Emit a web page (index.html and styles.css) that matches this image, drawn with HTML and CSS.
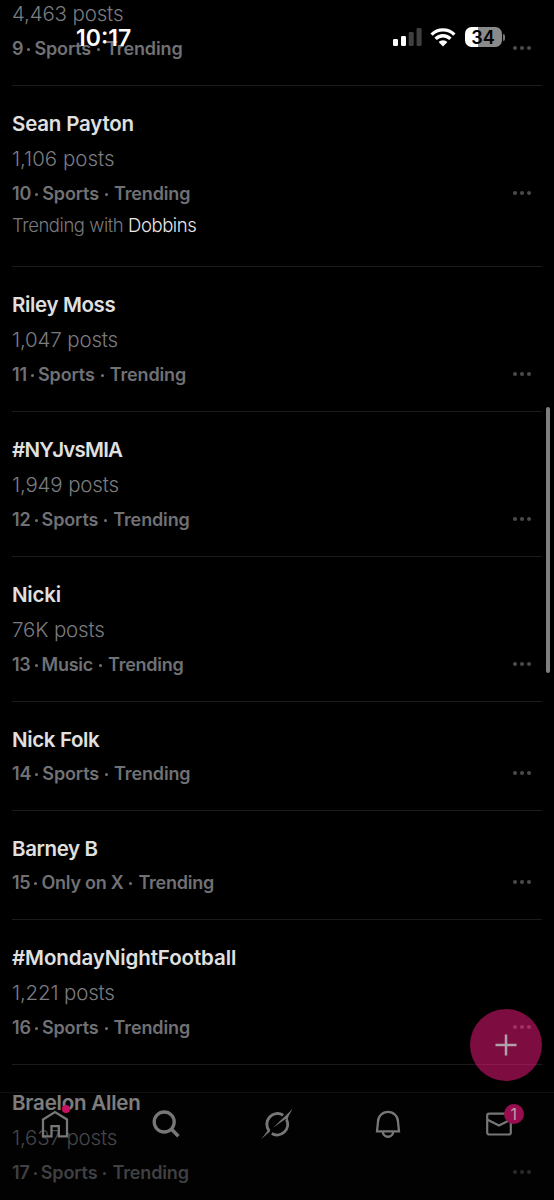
FILE: index.html
```html
<!DOCTYPE html>
<html lang="en">
<head>
<meta charset="utf-8">
<title>Trending</title>
<link rel="stylesheet" href="styles.css">
</head>
<body>
<main class="trends">
  <article class="trend trend-first">
    <p class="posts">4,463 posts</p>
    <p class="meta"><span>9</span><i class="dot"></i><span>Sports</span><i class="dot dot-wide"></i><span>Trending</span><span class="more"><i></i><i></i><i></i></span></p>
  </article>
  <article class="trend trend-related">
    <h2 class="title">Sean Payton</h2>
    <p class="posts posts-loose">1,106 posts</p>
    <p class="meta"><span>10</span><i class="dot"></i><span>Sports</span><i class="dot dot-wide"></i><span>Trending</span><span class="more"><i></i><i></i><i></i></span></p>
    <p class="related">Trending with <a>Dobbins</a></p>
  </article>
  <article class="trend">
    <h2 class="title title-tight">Riley Moss</h2>
    <p class="posts">1,047 posts</p>
    <p class="meta"><span>11</span><i class="dot"></i><span>Sports</span><i class="dot dot-wide"></i><span>Trending</span><span class="more"><i></i><i></i><i></i></span></p>
  </article>
  <article class="trend">
    <h2 class="title title-caps">#NYJvsMIA</h2>
    <p class="posts">1,949 posts</p>
    <p class="meta"><span>12</span><i class="dot"></i><span>Sports</span><i class="dot dot-wide"></i><span>Trending</span><span class="more"><i></i><i></i><i></i></span></p>
  </article>
  <article class="trend">
    <h2 class="title">Nicki</h2>
    <p class="posts">76K posts</p>
    <p class="meta meta-tight"><span>13</span><i class="dot"></i><span>Music</span><i class="dot dot-wide"></i><span>Trending</span><span class="more"><i></i><i></i><i></i></span></p>
  </article>
  <article class="trend">
    <h2 class="title title-tight">Nick Folk</h2>
    <p class="meta"><span>14</span><i class="dot"></i><span>Sports</span><i class="dot dot-wide"></i><span>Trending</span><span class="more"><i></i><i></i><i></i></span></p>
  </article>
  <article class="trend">
    <h2 class="title title-tight">Barney B</h2>
    <p class="meta meta-tight"><span>15</span><i class="dot"></i><span>Only on X</span><i class="dot dot-wide"></i><span>Trending</span><span class="more"><i></i><i></i><i></i></span></p>
  </article>
  <article class="trend">
    <h2 class="title title-long">#MondayNightFootball</h2>
    <p class="posts">1,221 posts</p>
    <p class="meta"><span>16</span><i class="dot"></i><span>Sports</span><i class="dot dot-wide"></i><span>Trending</span><span class="more"><i></i><i></i><i></i></span></p>
  </article>
  <article class="trend">
    <h2 class="title">Braelon Allen</h2>
    <p class="posts">1,637 posts</p>
    <p class="meta"><span>17</span><i class="dot"></i><span>Sports</span><i class="dot dot-wide"></i><span>Trending</span><span class="more"><i></i><i></i><i></i></span></p>
  </article>
</main>

<header class="status">
  <span class="clock">10:17</span>
  <div class="status-icons">
    <svg width="29" height="20" viewBox="0 0 29 20"><g fill="#fff"><rect x="0" y="12" width="5" height="7" rx="1.3"/><rect x="8" y="9" width="5" height="10" rx="1.3"/></g><g fill="#3f3f3f"><rect x="15.7" y="5" width="5" height="14" rx="1.3"/><rect x="23.6" y="1" width="5" height="18" rx="1.3"/></g></svg>
    <svg class="wifi" width="26" height="20" viewBox="0 0 26 20"><g fill="none" stroke="#fff" stroke-width="3.3"><path d="M1.6 7.6A16.2 16.2 0 0 1 24.4 7.6"/><path d="M5.6 11.8A10.5 10.5 0 0 1 20.4 11.8"/></g><path d="M8.6 15.1A6.2 6.2 0 0 1 17.4 15.1L13 19.4Z" fill="#fff"/></svg>
    <div class="battery"><span>34</span></div>
    <i class="battery-cap"></i>
  </div>
</header>

<i class="scrollbar"></i>

<button class="compose" aria-label="Compose"><svg width="22" height="22" viewBox="0 0 22 22"><path d="M11 .5V21.5M.5 11H21.5" stroke="#b0a1a9" stroke-width="2.5" fill="none"/></svg></button>

<nav class="tabs">
  <a class="tab"><svg width="28" height="30" viewBox="0 0 28 30"><path d="M2 10.5L14 3L26 10.5V27.3H17.8V17.2H10.5V27.3H2Z" fill="none" stroke="#777" stroke-width="2.3"/></svg><i class="home-dot"></i></a>
  <a class="tab"><svg width="28" height="30" viewBox="0 0 28 30"><circle cx="12.2" cy="13" r="10" fill="none" stroke="#777" stroke-width="3.3"/><path d="M19.3 20L26.4 27.2" stroke="#777" stroke-width="3.5"/></svg></a>
  <a class="tab"><svg width="34" height="34" viewBox="0 0 34 34"><g fill="none" stroke="#777" stroke-width="2.9"><path d="M9.2 24A10.7 10.7 0 0 1 23.2 8.2"/><path d="M11.8 26.6A10.7 10.7 0 0 0 26.6 12.6"/></g><path d="M32.6 1.4C29.5 7.6 28 9.6 27.5 13L25.2 12.2L13 20.8L21.8 12.2C25.6 8.5 29 5.5 32.6 1.4ZM1 32.6C4.4 27.7 6.3 25.6 8 22.9L10.4 24C7 27.3 4.4 29.4 1 32.6Z" fill="#777"/></svg></a>
  <a class="tab"><svg width="28" height="30" viewBox="0 0 28 30"><path d="M4 12.8A10 10 0 0 1 24 12.8L25 22.4H3Z" fill="none" stroke="#777" stroke-width="2.3"/><path d="M8.8 22.5A5.2 5.2 0 0 0 19.2 22.5" fill="none" stroke="#777" stroke-width="2.5"/></svg></a>
  <a class="tab"><svg width="28" height="30" viewBox="0 0 28 30"><rect x="2.2" y="4.7" width="23.6" height="20.8" rx="2" fill="none" stroke="#777" stroke-width="2.2"/><path d="M2.5 10.8L14 16.5L25.5 10.8" fill="none" stroke="#777" stroke-width="2.3"/></svg><b class="badge">1</b></a>
</nav>
</body>
</html>
```
FILE: styles.css
```css
* { box-sizing: border-box; }
html, body { margin: 0; height: 1200px; overflow: hidden; background: #000; }
body { position: relative; font-family: Inter, "Liberation Sans", sans-serif; }
p, h2 { margin: 0; }

.trends { padding: 0 12px; margin-top: -4px; }
.trend { height: 145px; padding-top: 21px; border-top: 1px solid #1b1b1c; white-space: nowrap; display: flow-root; }
.trend-first { height: 89px; padding-top: 0; border-top: 0; }
.trend-related { height: 181px; }
.trend:not(:has(.posts)) { height: 109px; }

.title { height: 34px; line-height: 33px; font-size: 20.5px; font-weight: 600; color: #e0e0e1; letter-spacing: -0.2px; }
.title-tight { letter-spacing: -0.36px; }
.title-caps { letter-spacing: -0.8px; }
.title-long { letter-spacing: -0.1px; }
.posts { height: 36px; line-height: 35px; font-size: 20.5px; font-weight: 350; color: #7b7c80; letter-spacing: -0.15px; }
.posts-loose { letter-spacing: 0; }
.meta { height: 32px; display: flex; align-items: center; font-size: 18px; font-weight: 600; color: #707175; letter-spacing: -0.13px; }
.meta-tight { letter-spacing: -0.25px; }
.dot { width: 3px; height: 3px; border-radius: 50%; background: #707276; margin: 2px 4px 0 4px; }
.dot-wide { margin: 2px 6px 0; }
.more { display: flex; gap: 3px; margin-left: auto; padding: 0 11px 0 0; }
.more i { width: 4px; height: 4px; border-radius: 50%; background: #4b4b4d; }
.related { height: 32px; margin-top: 1px; line-height: 31px; font-size: 18.5px; font-weight: 350; color: #78797d; letter-spacing: -0.45px; }
.related a { color: #e8e8e9; }

.status { position: absolute; top: 0; left: 0; width: 554px; height: 74px; padding-left: 76px; display: flex; align-items: center; color: #fff; }
.clock { font-size: 23px; font-weight: 600; line-height: 28px; padding-top: 1px; }
.status-icons { display: flex; align-items: center; margin-left: auto; padding-right: 49px; }
.wifi { margin: 0 9px 0 8px; }
.battery { width: 37px; height: 20px; border-radius: 6.5px; background: linear-gradient(90deg, #fff 13px, #8a8a8a 13px); display: flex; align-items: center; justify-content: center; color: #000; font-size: 18px; font-weight: 600; }
.battery-cap { width: 2.5px; height: 7px; margin-left: 1px; border-radius: 0 3px 3px 0; background: #777; }

.scrollbar { position: absolute; left: 546px; top: 407px; width: 4px; height: 266px; border-radius: 2px; background: #7f7f7f; }

.compose { position: absolute; left: 470px; top: 1009px; width: 72px; height: 72px; padding: 0; border: 0; border-radius: 50%; background: rgba(249, 24, 128, .5); display: grid; place-items: center; }

.tabs { position: absolute; left: 0; top: 1092px; width: 554px; height: 108px; padding-top: 14px; display: grid; grid-template-columns: repeat(5, 1fr); align-items: start; background: rgba(4, 4, 4, .45); border-top: 1px solid #101010; }
.tab { position: relative; height: 34px; display: grid; place-items: center; }
.home-dot { position: absolute; left: 62px; top: -2px; width: 8px; height: 8px; border-radius: 50%; background: #c80f61; }
.badge { position: absolute; left: 60.5px; top: -3px; width: 20px; height: 20px; border-radius: 50%; background: #980d50; color: #b99eaa; font-size: 16px; line-height: 20px; text-align: center; font-weight: 400; }
```
